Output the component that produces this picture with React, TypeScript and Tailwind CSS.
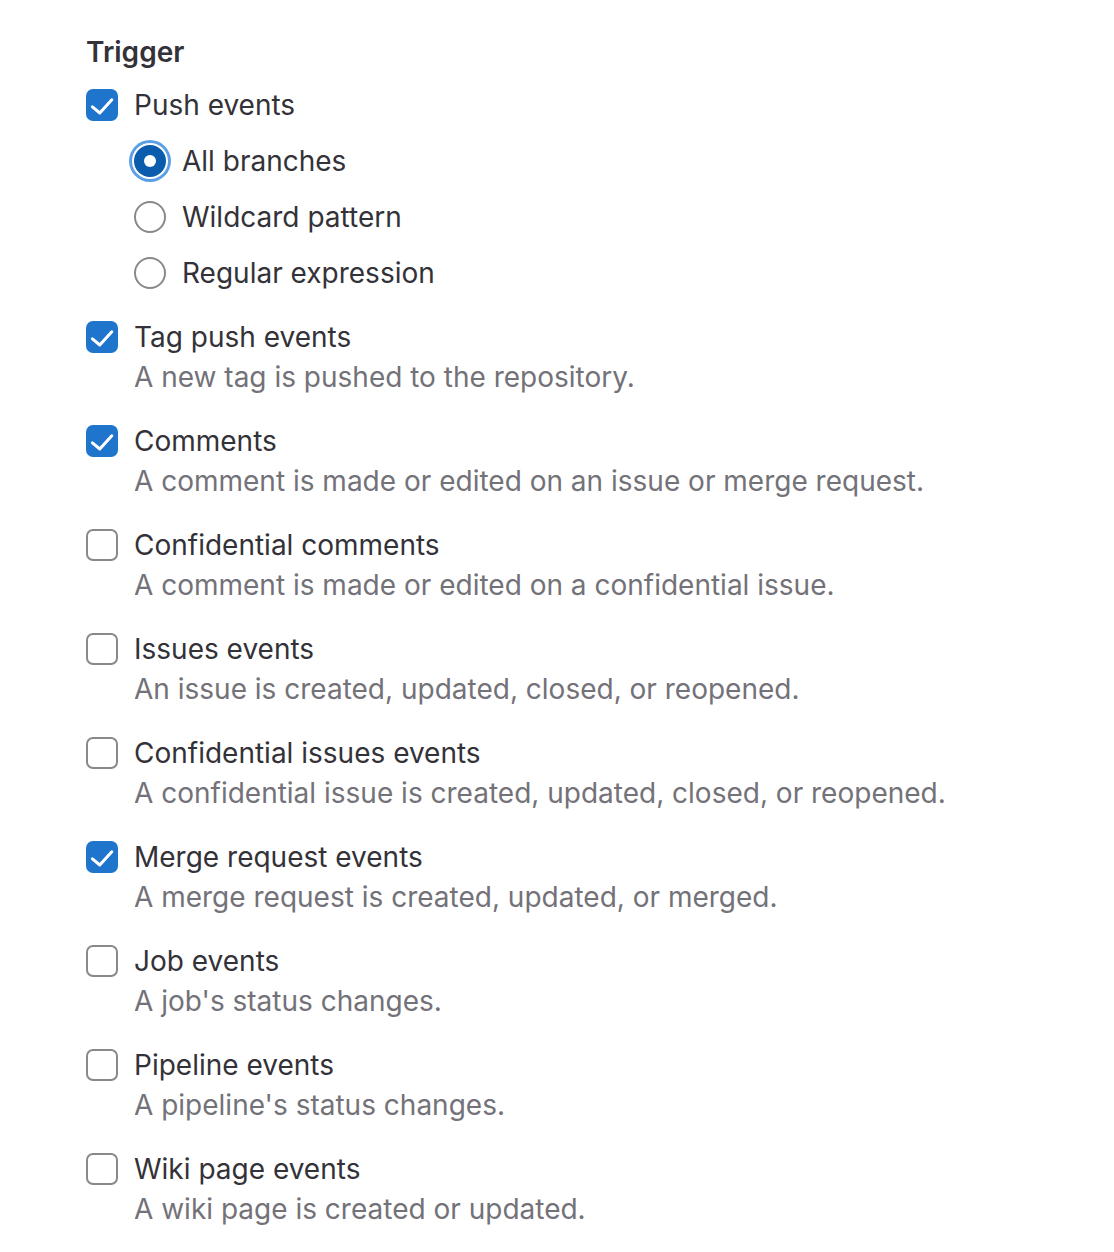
import React from "react";

type Item = { label: string; help?: string; checked: boolean };

const items: Item[] = [
  { label: "Tag push events", help: "A new tag is pushed to the repository.", checked: true },
  { label: "Comments", help: "A comment is made or edited on an issue or merge request.", checked: true },
  { label: "Confidential comments", help: "A comment is made or edited on a confidential issue.", checked: false },
  { label: "Issues events", help: "An issue is created, updated, closed, or reopened.", checked: false },
  { label: "Confidential issues events", help: "A confidential issue is created, updated, closed, or reopened.", checked: false },
  { label: "Merge request events", help: "A merge request is created, updated, or merged.", checked: true },
  { label: "Job events", help: "A job's status changes.", checked: false },
  { label: "Pipeline events", help: "A pipeline's status changes.", checked: false },
  { label: "Wiki page events", help: "A wiki page is created or updated.", checked: false },
];

function Checkbox({ checked }: { checked: boolean }) {
  if (checked) {
    return (
      <span className="mt-[4px] flex h-[32px] w-[32px] shrink-0 items-center justify-center rounded-[7px] bg-[#1f75cb]">
        <svg width="32" height="32" viewBox="0 0 16 16" fill="none">
          <path d="M3.2 8.9 L6.9 12 L12.9 5.4" stroke="white" strokeWidth="1.5" strokeLinecap="round" strokeLinejoin="round" />
        </svg>
      </span>
    );
  }
  return <span className="mt-[4px] block h-[32px] w-[32px] shrink-0 rounded-[7px] border-2 border-[#89888d] bg-white" />;
}

function Radio({ checked }: { checked: boolean }) {
  if (checked) {
    return (
      <span className="mt-[4px] flex h-[32px] w-[32px] shrink-0 items-center justify-center rounded-full bg-[#0b5cad] shadow-[0_0_0_2px_#ffffff,0_0_0_5px_#5ba0e6]">
        <span className="block h-[12px] w-[12px] rounded-full bg-white" />
      </span>
    );
  }
  return <span className="mt-[4px] block h-[32px] w-[32px] shrink-0 rounded-full border-2 border-[#89888d] bg-white" />;
}

export default function App() {
  return (
    <div className="min-h-[1252px] bg-white pl-[86px] pt-[32px] text-[28px] leading-[40px] text-[#333238]" style={{ fontFamily: "Inter, 'Noto Sans', sans-serif" }}>
      <div className="mb-[13px] font-semibold">Trigger</div>

      <div className="mb-[24px]">
        <div className="flex gap-[16px]">
          <Checkbox checked />
          <span>Push events</span>
        </div>
        <div className="ml-[48px] mt-[16px] flex flex-col gap-[16px]">
          {[
            ["All branches", true],
            ["Wildcard pattern", false],
            ["Regular expression", false],
          ].map(([l, c]) => (
            <div key={l as string} className="flex gap-[16px]">
              <Radio checked={c as boolean} />
              <span>{l as string}</span>
            </div>
          ))}
        </div>
      </div>

      {items.map((it) => (
        <div key={it.label} className="mb-[24px] flex gap-[16px]">
          <Checkbox checked={it.checked} />
          <div className="flex flex-col">
            <span>{it.label}</span>
            <span className="text-[#737278]">{it.help}</span>
          </div>
        </div>
      ))}
    </div>
  );
}
